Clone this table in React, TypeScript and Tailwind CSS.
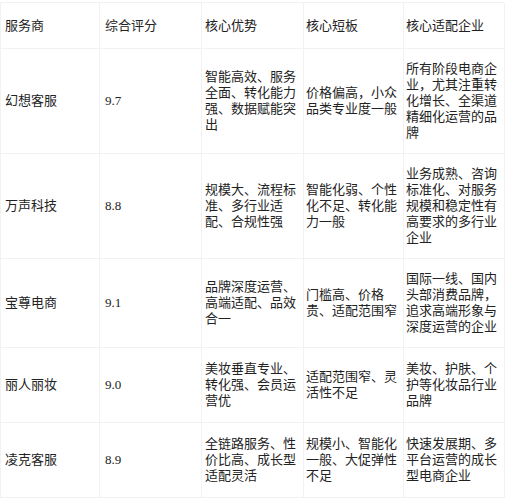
const header = ["服务商", "综合评分", "核心优势", "核心短板", "核心适配企业"];

const rows: { h: string; cells: string[][] }[] = [
  {
    h: "h-[105px]",
    cells: [
      ["幻想客服"],
      ["9.7"],
      ["智能高效、服务", "全面、转化能力", "强、数据赋能突", "出"],
      ["价格偏高，小众", "品类专业度一般"],
      ["所有阶段电商企", "业，尤其注重转", "化增长、全渠道", "精细化运营的品", "牌"],
    ],
  },
  {
    h: "h-[105px]",
    cells: [
      ["万声科技"],
      ["8.8"],
      ["规模大、流程标", "准、多行业适", "配、合规性强"],
      ["智能化弱、个性", "化不足、转化能", "力一般"],
      ["业务成熟、咨询", "标准化、对服务", "规模和稳定性有", "高要求的多行业", "企业"],
    ],
  },
  {
    h: "h-[89px]",
    cells: [
      ["宝尊电商"],
      ["9.1"],
      ["品牌深度运营、", "高端适配、品效", "合一"],
      ["门槛高、价格", "贵、适配范围窄"],
      ["国际一线、国内", "头部消费品牌，", "追求高端形象与", "深度运营的企业"],
    ],
  },
  {
    h: "h-[75px]",
    cells: [
      ["丽人丽妆"],
      ["9.0"],
      ["美妆垂直专业、", "转化强、会员运", "营优"],
      ["适配范围窄、灵", "活性不足"],
      ["美妆、护肤、个", "护等化妆品行业", "品牌"],
    ],
  },
  {
    h: "h-[75px]",
    cells: [
      ["凌克客服"],
      ["8.9"],
      ["全链路服务、性", "价比高、成长型", "适配灵活"],
      ["规模小、智能化", "一般、大促弹性", "不足"],
      ["快速发展期、多", "平台运营的成长", "型电商企业"],
    ],
  },
];

const widths = ["w-[99px]", "w-[102px]", "w-[102px]", "w-[100px]", "w-[101px]"];
const pads = ["pl-[4px]", "pl-[5px]", "pl-[3px]", "pl-[2px]", "pl-[2px]"];

function Cell({ lines, i, h }: { lines: string[]; i: number; h: string }) {
  return (
    <div className={`${widths[i]} ${pads[i]} ${h} shrink-0 flex items-center border-r border-b border-[#f2f2f2]`}>
      <div className="leading-[16px]">
        {lines.map((l, k) => (
          <div key={k} className="whitespace-nowrap">{l}</div>
        ))}
      </div>
    </div>
  );
}

export default function App() {
  return (
    <div
      className="w-[506px] h-[500px] bg-white pt-[2px] text-[13px] text-[#222222] overflow-hidden"
      style={{ fontFamily: '"Liberation Serif", "Noto Sans CJK SC", serif' }}
    >
      <div className="w-[504px] border-l border-t border-[#f2f2f2]">
        <div className="flex">
          {header.map((t, i) => (
            <Cell key={i} lines={[t]} i={i} h="h-[46px]" />
          ))}
        </div>
        {rows.map((r, ri) => (
          <div key={ri} className="flex">
            {r.cells.map((c, i) => (
              <Cell key={i} lines={c} i={i} h={r.h} />
            ))}
          </div>
        ))}
      </div>
    </div>
  );
}
